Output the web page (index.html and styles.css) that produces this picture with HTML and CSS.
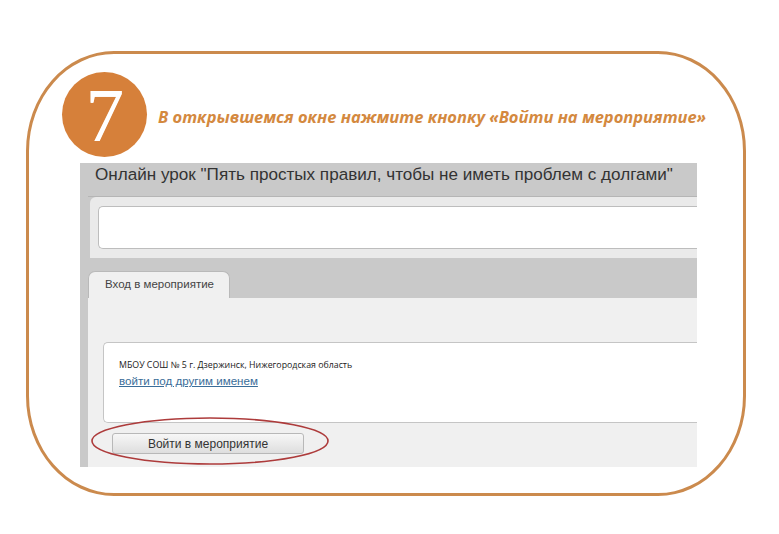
FILE: index.html
```html
<!DOCTYPE html>
<html lang="ru">
<head>
    <meta charset="UTF-8">
    <meta name="viewport" content="width=device-width, initial-scale=1.0">
    <title>Шаг 7</title>
    <link rel="stylesheet" href="styles.css">
</head>
<body>
    <div class="frame">
        <div class="step">
            <div class="step-num">7</div>
            <h2 class="step-text">В открывшемся окне нажмите кнопку «Войти на мероприятие»</h2>
        </div>

        <div class="shot">
            <div class="shot-title">Онлайн урок "Пять простых правил, чтобы не иметь проблем с долгами"</div>
            <div class="search-box">
                <div class="search-field"></div>
            </div>
            <div class="tabs">
                <div class="tab">Вход в мероприятие</div>
            </div>
            <div class="tab-body">
                <div class="user-box">
                    <div class="org">МБОУ СОШ № 5 г. Дзержинск, Нижегородская область</div>
                    <a class="relogin" href="#">войти под другим именем</a>
                </div>
                <button class="enter-btn" type="button">Войти в мероприятие</button>
                <svg class="mark" width="240" height="50" viewBox="0 0 240 50">
                    <ellipse cx="120" cy="25" rx="118" ry="23" fill="none" stroke="#ad3b3b" stroke-width="1.6"/>
                </svg>
            </div>
        </div>
    </div>
</body>
</html>
```

FILE: styles.css
```css
body {
    margin: 0;
    background: #fff;
    font-family: "Liberation Sans", Arial, sans-serif;
}
.frame {
    width: 681px;
    height: 421px;
    margin: 51px 0 0 26px;
    padding: 18px 0 0 33px;
    border: 3px solid #cb8a4d;
    border-radius: 88px / 100px;
}
.step {
    display: flex;
    align-items: center;
    gap: 11px;
}
.step-num {
    width: 85px;
    height: 85px;
    border-radius: 50%;
    background: #d6803a;
    color: #fff;
    font-family: "Liberation Serif", "Times New Roman", serif;
    font-size: 76px;
    line-height: 87px;
    text-align: center;
    text-shadow: 0.6px 0 0 #fff;
}
.step-text {
    margin: 0;
    padding-top: 4px;
    font-family: "Open Sans", sans-serif;
    font-style: italic;
    font-weight: 700;
    font-size: 16.5px;
    color: #d4893f;
}
.shot {
    width: 609px;
    margin: 6px 0 0 18px;
    padding-left: 8px;
    background: #c9c9c9;
}
.shot-title {
    height: 33px;
    line-height: 24px;
    padding-left: 7px;
    font-size: 17.1px;
    color: #333;
    border-bottom: 1px solid #b5b5b5;
}
.search-box {
    margin-left: 2px;
    padding: 9px 0 9px 8px;
    background: #eaeaea;
    border-top-left-radius: 6px;
}
.search-field {
    height: 41px;
    background: #fff;
    border: 1px solid #bdbdbd;
    border-right: none;
    border-radius: 5px 0 0 5px;
}
.tabs {
    height: 27px;
    padding-top: 13px;
}
.tab {
    width: 142px;
    height: 27px;
    box-sizing: border-box;
    padding: 6px 0 0 16px;
    background: #f0f0f0;
    border: 1px solid #b9b9b9;
    border-bottom: none;
    border-radius: 7px 7px 0 0;
    font-size: 11.5px;
    color: #444;
}
.tab-body {
    position: relative;
    height: 125px;
    padding: 44px 0 0 15px;
    background: #f0f0f0;
}
.user-box {
    height: 79px;
    padding-left: 15px;
    background: #fff;
    border: 1px solid #c5c5c5;
    border-right: none;
    border-radius: 5px 0 0 5px;
}
.org {
    padding-top: 16px;
    font-family: "Open Sans", sans-serif;
    font-size: 8.8px;
    color: #222;
}
.relogin {
    display: inline-block;
    margin-top: 1px;
    font-size: 11.6px;
    color: #3a6d99;
}
.enter-btn {
    display: block;
    width: 192px;
    height: 21px;
    margin: 10px 0 0 9px;
    padding: 0;
    border: 1px solid #b8b8b8;
    border-radius: 3px;
    background: linear-gradient(#f7f7f7, #dedede);
    font-family: "Liberation Sans", Arial, sans-serif;
    font-size: 12px;
    color: #333;
}
.mark {
    position: absolute;
    left: 2px;
    top: 118px;
}
```
